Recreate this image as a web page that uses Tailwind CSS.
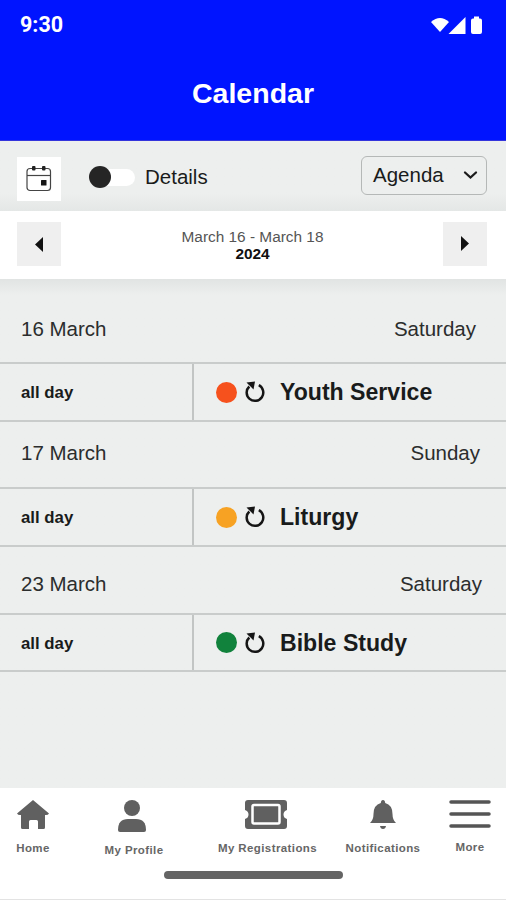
<!DOCTYPE html>
<html lang="en">
<head>
<meta charset="utf-8">
<title>Calendar</title>
<script src="https://cdn.jsdelivr.net/npm/@tailwindcss/browser@4"></script>
</head>
<body class="w-[506px] h-[900px] overflow-hidden bg-[#edefee] font-['Liberation_Sans',Arial,sans-serif] text-[#191b1b] flex flex-col">
<svg class="hidden"><defs>
<symbol id="repeat" viewBox="0 0 20 22"><path d="M4.300 5.500A8.300 8.300 0 1 0 13.800 4.200" fill="none" stroke="#151515" stroke-width="2.500"/><path d="M1.500 1.500L10 .5L8.500 8.500L6.300 6.200L4 4Z" fill="#151515"/></symbol>
</defs></svg>
<header class="h-[141px] shrink-0 bg-[#0014ff] text-white flex flex-col border-b border-[#3434dc]">
  <div class="h-[50px] flex items-center justify-between pl-[20px] pr-[22px]">
    <span class="font-[Roboto,sans-serif] font-bold text-[21.500px] leading-[50px]">9:30</span>
    <svg class="w-[54px] h-[20px]" viewBox="0 0 54 20" fill="#fff"><path d="M1 7Q10-1 19 7L10 17Z"/><path d="M35.500 2V19H18.500Z"/><path d="M41 5.500Q41 3.500 43 3.500H44V1.500H49V3.500H50Q52 3.500 52 5.500V17Q52 19 50 19H43Q41 19 41 17Z"/></svg>
  </div>
  <h1 class="text-center font-bold text-[28.500px] leading-[34px] mt-[26px]">Calendar</h1>
</header>
<section class="h-[70px] shrink-0 flex items-start px-[17px] pt-[15px] bg-linear-to-b from-[#edefee] from-75% to-[#e4e7e6]">
  <button class="size-[44px] mt-px bg-white grid place-items-center"><svg class="size-[28px]" viewBox="0 0 28 28" fill="none" stroke="#444"><rect x="2" y="3.500" width="23.500" height="22" rx="3" stroke-width="1.200"/><path d="M2 10.500H25.500" stroke-width="1.200"/><rect x="7" y="1" width="3.500" height="4.500" rx="1" fill="#222" stroke="none"/><rect x="17" y="1" width="3.500" height="4.500" rx="1" fill="#222" stroke="none"/><rect x="16" y="15" width="5.500" height="5.500" rx=".5" fill="#161616" stroke="none"/></svg></button>
  <div class="ml-[28px] mt-[10px] flex items-center">
    <span class="w-[46px] h-[22px] flex items-center"><span class="w-full h-[17px] rounded-full bg-white flex items-center"><span class="size-[22px] shrink-0 rounded-full bg-[#252525]"></span></span></span>
    <span class="ml-[10px] text-[20.500px] leading-[22px]">Details</span>
  </div>
  <div class="ml-auto mr-[2px] w-[126px] h-[39px] rounded-[6px] border border-[#b5b8b7] flex items-center justify-between pl-[11px] pr-[8px] pb-px text-[20.500px]">Agenda<svg class="w-[15px] h-[10px]" viewBox="0 0 15 10"><path d="M2 2.500L7.500 7.500L13 2.500" fill="none" stroke="#1b1b1b" stroke-width="2.300" stroke-linecap="round"/></svg></div>
</section>
<section class="h-[68px] shrink-0 bg-white flex items-start justify-between pl-[17px] pr-[19px] pt-[11px]">
  <button class="size-[44px] bg-[#efefef] grid place-items-center"><svg class="w-[8px] h-[15px]" viewBox="0 0 8 15"><path d="M8 0V15L0 7.500Z" fill="#111"/></svg></button>
  <div class="text-center text-[15.400px] leading-[17px] pt-[6px] pl-px"><div class="text-[#555]">March 16 - March 18</div><div class="font-bold text-[#111]">2024</div></div>
  <button class="size-[44px] bg-[#efefef] grid place-items-center"><svg class="w-[8px] h-[15px] -mt-[2px]" viewBox="0 0 8 15"><path d="M0 0V15L8 7.500Z" fill="#111"/></svg></button>
</section>
<main class="h-[509px] shrink-0 bg-linear-to-b from-[#e1e4e3] to-[#edefee] to-[16px] text-[20.500px]">
  <div class="h-[83px] pt-[33px] leading-[34px] flex justify-between pl-[21px] pr-[30px] text-[#2b2d2d]"><span>16 March</span><span>Saturday</span></div>
  <div class="h-[60px] border-y-2 border-[#c9cccb] flex items-center"><span class="w-[194px] h-full border-r-2 border-[#c2c5c4] pl-[21px] pt-px flex items-center text-[16.800px] font-bold">all day</span><span class="ml-[22px] size-[21px] rounded-full bg-[#f6511d]"></span><svg class="ml-[8px] w-[20px] h-[22px]"><use href="#repeat"/></svg><span class="ml-[15px] text-[23.100px] font-bold">Youth Service</span></div>
  <div class="h-[65px] pt-[14px] leading-[34px] flex justify-between pl-[21px] pr-[26px] text-[#2b2d2d]"><span>17 March</span><span>Sunday</span></div>
  <div class="h-[60px] border-y-2 border-[#c9cccb] flex items-center"><span class="w-[194px] h-full border-r-2 border-[#c2c5c4] pl-[21px] pt-px flex items-center text-[16.800px] font-bold">all day</span><span class="ml-[22px] size-[21px] rounded-full bg-[#f7a223]"></span><svg class="ml-[8px] w-[20px] h-[22px]"><use href="#repeat"/></svg><span class="ml-[15px] text-[23.100px] font-bold">Liturgy</span></div>
  <div class="h-[66px] pt-[20px] leading-[34px] flex justify-between pl-[21px] pr-[24px] text-[#2b2d2d]"><span>23 March</span><span>Saturday</span></div>
  <div class="h-[59px] border-y-2 border-[#c9cccb] flex items-center"><span class="w-[194px] h-full border-r-2 border-[#c2c5c4] pl-[21px] pt-[2px] flex items-center text-[16.800px] font-bold">all day</span><span class="ml-[22px] size-[21px] rounded-full bg-[#11823c]"></span><svg class="ml-[8px] w-[20px] h-[22px]"><use href="#repeat"/></svg><span class="ml-[15px] pt-[2px] text-[23.100px] font-bold">Bible Study</span></div>
</main>
<nav class="h-[112px] shrink-0 bg-white border-b border-[#e3e3e3] flex flex-col text-[11.500px] font-bold text-[#666] tracking-[.4px]">
  <div class="h-[83px] flex items-start pt-[11px] leading-[14px] whitespace-nowrap">
    <a class="w-[66px] flex flex-col items-center"><svg class="w-[34px] h-[31px]" viewBox="0 0 34 31"><path d="M17 1L33 14.500Q32 16 30 16H29V28.500Q29 30 27.500 30H22V22.500Q22 21 20.500 21H14.500Q13 21 13 22.500V30H6.500Q5 30 5 28.500V16H4Q2 16 1 14.500Z" fill="#606060"/></svg><span class="mt-[11px]">Home</span></a>
    <a class="w-[136px] flex flex-col items-center"><svg class="w-[30px] h-[34px] -ml-[4px]" viewBox="0 0 30 34" fill="#606060"><circle cx="15" cy="9" r="8"/><path d="M1 31Q1 20 11 20H19Q29 20 29 31Q29 33 27 33H3Q1 33 1 31Z"/></svg><span class="mt-[10px]">My Profile</span></a>
    <a class="w-[130px] flex flex-col items-center"><svg class="w-[44px] h-[31px] -ml-[2px]" viewBox="0 0 44 31"><path d="M4 1H40Q43 1 43 4V11Q39.500 12 39.500 15.500T43 20V27Q43 30 40 30H4Q1 30 1 27V20Q4.500 19 4.500 15.500T1 11V4Q1 1 4 1Z" fill="#606060"/><rect x="8.500" y="6" width="27" height="18.500" rx="1.500" fill="none" stroke="#fff" stroke-width="2.500"/></svg><span class="mt-[11px] ml-px">My Registrations</span></a>
    <a class="w-[102px] flex flex-col items-center"><svg class="w-[28px] h-[32px]" viewBox="0 0 28 32"><path d="M14 1Q16 1 16.200 4Q23.500 6 23.500 15Q23.500 21 27 24H1Q4.500 21 4.500 15Q4.500 6 11.800 4Q12 1 14 1ZM11 27H17Q16.500 30 14 30T11 27Z" fill="#606060"/></svg><span class="mt-[10px]">Notifications</span></a>
    <a class="w-[72px] flex flex-col items-center"><svg class="w-[42px] h-[31px]" viewBox="0 0 42 31"><path d="M2 3H40M2 15H40M2 27H40" stroke="#555" stroke-width="3.500" stroke-linecap="round"/></svg><span class="mt-[10px]">More</span></a>
  </div>
  <div class="w-[179px] h-[8px] rounded-full bg-[#646464] ml-[164px]"></div>
</nav>
</body>
</html>
